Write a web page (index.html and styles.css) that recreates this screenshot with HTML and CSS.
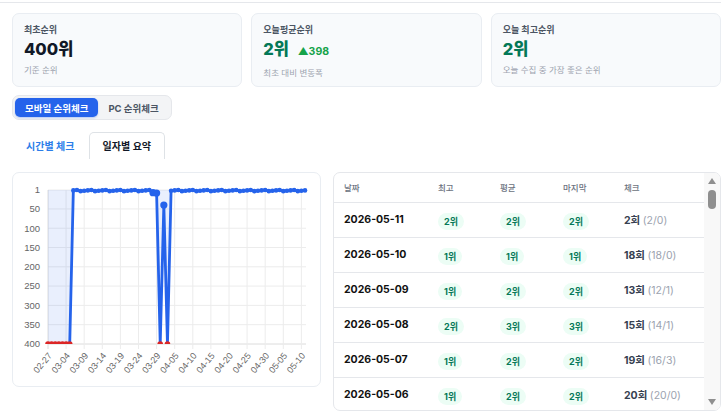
FILE: index.html
```html
<!DOCTYPE html>
<html lang="ko">
<head>
    <meta charset="UTF-8">
    <meta name="viewport" content="width=device-width, initial-scale=1.0">
    <title>순위 요약</title>
    <link rel="stylesheet" href="styles.css">
</head>
<body>
    <div class="topbar"></div>

    <main class="page">
        <section class="stats">
            <div class="stat-card">
                <div class="stat-label">최초순위</div>
                <div class="stat-value">400위</div>
                <div class="stat-sub">기준 순위</div>
            </div>
            <div class="stat-card">
                <div class="stat-label">오늘평균순위</div>
                <div class="stat-value good">2위 <span class="delta">▲398</span></div>
                <div class="stat-sub">최초 대비 변동폭</div>
            </div>
            <div class="stat-card">
                <div class="stat-label">오늘 최고순위</div>
                <div class="stat-value good">2위</div>
                <div class="stat-sub">오늘 수집 중 가장 좋은 순위</div>
            </div>
        </section>

        <div class="device-toggle">
            <button class="active">모바일 순위체크</button>
            <button>PC 순위체크</button>
        </div>

        <ul class="tabs">
            <li><a href="#">시간별 체크</a></li>
            <li class="active"><a href="#">일자별 요약</a></li>
        </ul>

        <section class="summary">
            <div class="chart-card">
                <svg id="chart" width="307" height="213" viewBox="13 174 307 213"></svg>
            </div>
            <div class="table-card">
                <div class="table-wrap">
                    <table class="daily">
                        <colgroup>
                            <col style="width:94px">
                            <col style="width:62px">
                            <col style="width:63px">
                            <col style="width:61px">
                            <col>
                        </colgroup>
                        <thead>
                            <tr><th>날짜</th><th>최고</th><th>평균</th><th>마지막</th><th>체크</th></tr>
                        </thead>
                        <tbody id="rows"></tbody>
                    </table>
                </div>
                <div class="scrollbar">
                    <span class="arrow up"></span>
                    <span class="thumb"></span>
                    <span class="arrow down"></span>
                </div>
            </div>
        </section>
    </main>

    <script>
        // daily ranks, oldest first (400 = not ranked)
        const dates = [];
        const day0 = new Date(2026, 1, 27);
        while (dates.length < 72) {
            const m = String(day0.getMonth() + 1).padStart(2, "0");
            const dd = String(day0.getDate()).padStart(2, "0");
            const key = `${m}-${dd}`;
            if (key !== "04-01" && key !== "04-02") dates.push(key);
            day0.setDate(day0.getDate() + 1);
        }

        const values = dates.map((_, i) => {
            if (i <= 6) return 400;
            if (i === 29) return 8;
            if (i === 30) return 9;
            if (i === 31 || i === 33) return 400;
            if (i === 32) return 40;
            return 1 + ((i * 7) % 4);
        });

        const NS = "http://www.w3.org/2000/svg";
        const svg = document.getElementById("chart");
        const plotLeft = 48, plotRight = 306, plotTop = 191, plotBottom = 345, step = 3.62;
        const xs = i => plotLeft + i * step;
        const ys = v => plotTop + (v - 1) * (plotBottom - plotTop) / 399;

        function add(tag, attrs, text, parent) {
            const el = document.createElementNS(NS, tag);
            for (const k in attrs) el.setAttribute(k, attrs[k]);
            if (text) el.textContent = text;
            (parent || svg).appendChild(el);
            return el;
        }

        const clip = add("clipPath", { id: "plot" });
        add("rect", { x: plotLeft - 4, y: plotTop - 6, width: plotRight - plotLeft + 8, height: plotBottom - plotTop + 6 }, null, clip);

        // grid
        [1, 50, 100, 150, 200, 250, 300, 350, 400].forEach(v => {
            const y = ys(v);
            add("line", { x1: plotLeft, x2: plotRight, y1: y, y2: y, class: v === 400 ? "axis" : "grid" });
            add("text", { x: 40, y: y, class: "ytick", dy: "0.35em" }, String(v));
        });
        for (let i = 0; i <= 70; i += 5) {
            const x = xs(i);
            add("line", { x1: x, x2: x, y1: plotTop, y2: plotBottom + 5, class: i === 0 ? "axis" : "grid" });
            add("text", { class: "xtick", transform: `translate(${x + 2} ${plotBottom + 10}) rotate(-50)`, dy: "0.35em" }, dates[i]);
        }

        const pts = values.map((v, i) => [xs(i), ys(v)]);
        const line = pts.map(p => p.join(",")).join(" ");
        add("polygon", { points: `${xs(0)},${plotTop} ${line} ${xs(71)},${plotTop}`, class: "fill", "clip-path": "url(#plot)" });
        add("polyline", { points: line, class: "line", "clip-path": "url(#plot)" });

        values.forEach((v, i) => {
            const big = i === 29 || i === 30 || i === 32;
            add("circle", {
                cx: pts[i][0], cy: pts[i][1], r: big ? 3.6 : v === 400 ? 2.8 : 2.3,
                class: v === 400 ? "dot miss" : "dot",
                "clip-path": "url(#plot)"
            });
        });

        // table
        const rows = [
            ["2026-05-11", 2, 2, 2, 2, "2/0"],
            ["2026-05-10", 1, 1, 1, 18, "18/0"],
            ["2026-05-09", 1, 2, 2, 13, "12/1"],
            ["2026-05-08", 2, 3, 3, 15, "14/1"],
            ["2026-05-07", 1, 2, 2, 19, "16/3"],
            ["2026-05-06", 1, 2, 2, 20, "20/0"]
        ];

        const tbody = document.getElementById("rows");
        rows.forEach(row => {
            const tr = document.createElement("tr");
            tr.innerHTML = `
                <td class="date">${row[0]}</td>
                <td><span class="rank">${row[1]}위</span></td>
                <td><span class="rank">${row[2]}위</span></td>
                <td><span class="rank">${row[3]}위</span></td>
                <td class="checks">${row[4]}회 <span class="muted">(${row[5]})</span></td>
            `;
            tbody.appendChild(tr);
        });
    </script>
</body>
</html>
```

FILE: styles.css
```css
* {
    box-sizing: border-box;
}
body {
    margin: 0;
    font-family: Inter, "Noto Sans CJK KR", sans-serif;
    color: #111827;
    background: #fff;
    overflow: hidden;
}
.topbar {
    height: 3px;
    border-bottom: 1px solid #e5e7eb;
}
.page {
    padding: 10px 0 0 12px;
}

/* stat cards */
.stats {
    display: grid;
    grid-template-columns: repeat(3, 1fr);
    gap: 9px;
}
.stat-card {
    height: 74px;
    padding: 9px 11px 0;
    background: #f8fafc;
    border: 1px solid #e9edf2;
    border-radius: 7px;
}
.stat-label {
    font-size: 9px;
    font-weight: 700;
    line-height: 14px;
    color: #4b5563;
}
.stat-value {
    margin-top: 1px;
    font-size: 16.5px;
    font-weight: 800;
    line-height: 22px;
    color: #111827;
}
.stat-value.good {
    color: #047857;
}
.delta {
    margin-left: 5px;
    font-size: 10.5px;
    font-weight: 700;
    color: #16a34a;
}
.stat-sub {
    margin-top: 3px;
    font-size: 8.5px;
    line-height: 14px;
    color: #9ca3af;
}

/* device toggle */
.device-toggle {
    display: inline-flex;
    margin-top: 8px;
    padding: 2px;
    background: #f3f4f6;
    border: 1px solid #e5e7eb;
    border-radius: 7px;
}
.device-toggle button {
    height: 19px;
    padding: 0 10px;
    border: 0;
    border-radius: 5px;
    background: transparent;
    font-family: inherit;
    font-size: 9.5px;
    font-weight: 700;
    color: #4b5563;
}
.device-toggle button.active {
    background: #2563eb;
    color: #fff;
    box-shadow: 0 1px 2px rgba(37, 99, 235, 0.3);
}

/* tabs */
.tabs {
    display: flex;
    margin: 12px 0 0;
    padding: 0;
    list-style: none;
}
.tabs a {
    display: block;
    padding: 6px 13px;
    font-size: 10px;
    font-weight: 600;
    line-height: 14px;
    color: #2b7de9;
    text-decoration: none;
    border: 1px solid transparent;
    border-bottom: 0;
    border-radius: 5px 5px 0 0;
}
.tabs .active a {
    color: #111827;
    border-color: #dee2e6;
}

/* chart + table */
.summary {
    display: grid;
    grid-template-columns: 309px 1fr;
    gap: 12px;
    margin-top: 13px;
    align-items: start;
}
.chart-card {
    height: 215px;
    border: 1px solid #e9edf2;
    border-radius: 7px;
}
.chart-card svg {
    display: block;
}
.grid {
    stroke: #ececec;
    stroke-width: 1;
}
.axis {
    stroke: #dcdcdc;
    stroke-width: 1;
}
.ytick,
.xtick {
    font-family: "Liberation Sans", Arial, sans-serif;
    font-size: 9.5px;
    fill: #666;
    text-anchor: end;
}
.xtick {
    font-size: 9px;
}
.fill {
    fill: rgba(37, 99, 235, 0.1);
}
.line {
    fill: none;
    stroke: #2563eb;
    stroke-width: 2.8;
    stroke-linejoin: round;
}
.dot {
    fill: #2563eb;
}
.dot.miss {
    fill: #dc2626;
}

.table-card {
    display: flex;
    height: 239px;
    border: 1px solid #e5e7eb;
    border-radius: 7px;
    overflow: hidden;
}
.table-wrap {
    flex: 1;
    overflow: hidden;
}
.scrollbar {
    display: flex;
    flex-direction: column;
    align-items: center;
    width: 16px;
    padding: 5px 0 5px;
    background: #f8f8f8;
}
.arrow {
    width: 0;
    height: 0;
    border-left: 4.5px solid transparent;
    border-right: 4.5px solid transparent;
}
.arrow.up {
    border-bottom: 6px solid #8f8f8f;
}
.arrow.down {
    margin-top: auto;
    border-top: 6px solid #8f8f8f;
}
.thumb {
    width: 8px;
    height: 19px;
    margin-top: 6px;
    border-radius: 4px;
    background: #8f8f8f;
}

.daily {
    width: 100%;
    border-collapse: collapse;
    table-layout: fixed;
}
.daily th {
    height: 29px;
    padding: 0 10px;
    text-align: left;
    font-size: 8.5px;
    font-weight: 500;
    color: #6b7280;
    border-bottom: 1px solid #e5e7eb;
}
.daily td {
    height: 35px;
    padding: 0 10px;
    border-bottom: 1px solid #e5e7eb;
    white-space: nowrap;
}
.daily .date {
    font-size: 10.5px;
    font-weight: 700;
    color: #111;
}
.rank {
    display: inline-block;
    padding: 0 6px;
    line-height: 17px;
    border-radius: 9px;
    background: #ecfdf5;
    font-size: 9px;
    font-weight: 700;
    color: #047857;
}
.checks {
    font-size: 10.5px;
    font-weight: 700;
    color: #374151;
}
.muted {
    font-weight: 400;
    color: #9ca3af;
}
```
